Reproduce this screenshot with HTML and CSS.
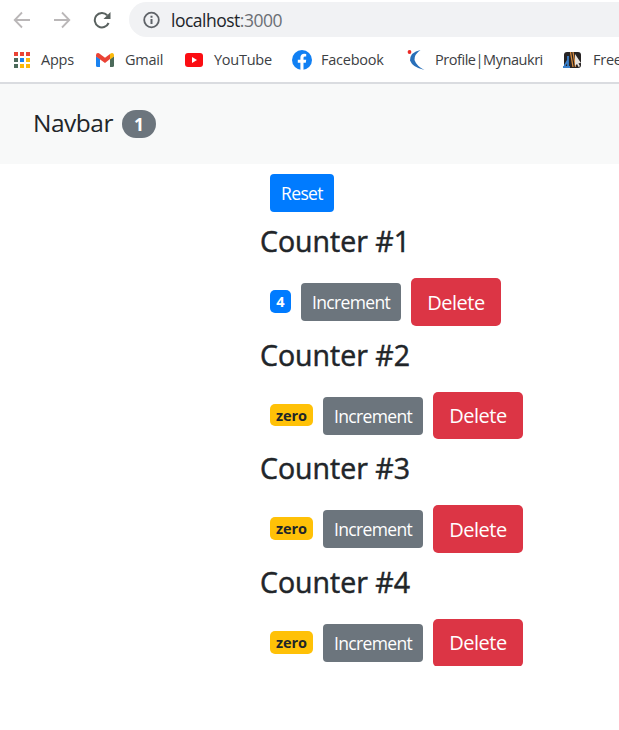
FILE: index.html
```html
<!DOCTYPE html>
<html lang="en">
<head>
<meta charset="utf-8">
<title>React App</title>
<link rel="stylesheet" href="styles.css">
</head>
<body>
<header class="browser">
  <div class="toolbar">
    <svg class="nav-icon back" width="18" height="18" viewBox="0 0 18 18" fill="none" stroke="#bab7b8" stroke-width="1.8"><path d="M17 9H2M9 1.5L1.7 9L9 16.500"/></svg>
    <svg class="nav-icon forward" width="18" height="18" viewBox="0 0 18 18" fill="none" stroke="#bab7b8" stroke-width="1.8"><path d="M1 9H16M9 1.500L16.300 9L9 16.500"/></svg>
    <svg class="nav-icon reload" width="18" height="18" viewBox="0 0 18 18"><path d="M15.600 12A7.200 7.200 0 1 1 14.200 4.200" fill="none" stroke="#59615f" stroke-width="2"/><path d="M17.500 1v7h-7z" fill="#59615f"/></svg>
    <div class="address">
      <svg width="18" height="18" viewBox="0 0 18 18"><circle cx="9.500" cy="9" r="7.300" fill="none" stroke="#5f6368" stroke-width="1.800"/><path d="M9.500 8v5M9.500 4.800v2" stroke="#5f6368" stroke-width="2"/></svg>
      <span class="url">localhost<span class="port">:3000</span></span>
    </div>
  </div>
  <nav class="bookmarks">
    <a class="bookmark apps"><svg width="18" height="18" viewBox="0 0 18 18"><path fill="#ea4335" d="M1 1h4v4H1zM7 1h4v4H7zM13 1h4v4h-4z"/><path fill="#4c6a5a" d="M1 7h4v4H1zM1 13h4v4H1z"/><path fill="#1a82f0" d="M7 7h4v4H7z"/><path fill="#fbb90b" d="M13 7h4v4h-4zM7 13h4v4H7zM13 13h4v4h-4z"/></svg><span>Apps</span></a>
    <a class="bookmark gmail"><svg width="20" height="16" viewBox="0 0 20 16"><path fill="#1a82f0" d="M1 4l4 3v8H2.500Q1 15 1 13.500z"/><path fill="#4c6a5a" d="M15 7l4-3v9.500Q19 15 17.500 15H15z"/><path fill="#ea4335" d="M1 3.200Q1 1 3 1Q4 1 5 2L10 5.700L15 2v5L10 11L1 4.500z"/><path fill="#fbb90b" d="M15 2Q16.500.700 18 1.300Q19 1.800 19 3.200V4.500L15 7.500z"/></svg><span>Gmail</span></a>
    <a class="bookmark youtube"><svg width="18" height="14" viewBox="0 0 18 14"><rect width="18" height="14" rx="3" fill="#fb0d12"/><path fill="#fff" d="M7 4l5 3l-5 3z"/></svg><span>YouTube</span></a>
    <a class="bookmark facebook"><svg width="20" height="20" viewBox="0 0 20 20"><circle cx="10" cy="10" r="10" fill="#1180f3"/><path fill="#fff" d="M8.400 20v-7.300H5.800V9.800h2.600V7.600C8.400 5 9.900 3.700 12.200 3.700q1.100 0 2 .2v2.500h-1.200q-1.500 0-1.500 1.400v2h2.700l-.4 2.900h-2.300V20z"/></svg><span>Facebook</span></a>
    <a class="bookmark naukri"><svg width="18" height="20" viewBox="0 0 18 20"><circle cx="2.500" cy="2" r="1.900" fill="#eb2925"/><path fill="#286fb9" d="M13.500 0Q7 4.500 7.500 10Q9.500 16 17.500 20Q5.500 17.500 3 10.500Q3 2 13.500 0z"/></svg><span>Profile|Mynaukri</span></a>
    <a class="bookmark free"><svg width="20" height="18" viewBox="0 0 20 18"><rect x="2" y="1" width="17" height="16" rx="3" fill="#272323"/><path d="M6 5v5M2.500 15l3.500-6v6M1 16h7" stroke="#397fca" stroke-width="1.800" fill="none"/><path d="M8.500 1l2.500 15M11 1l2.500 15" stroke="#d98c3f" stroke-width="1.300"/><path fill="#e8e2dc" d="M13 3l6 9l-2.500.2l1.500 3l-1.500.8l-1.500-3l-2 2z"/></svg><span>Free</span></a>
  </nav>
</header>
<nav class="navbar"><span class="brand">Navbar</span><span class="pill">1</span></nav>
<main class="counters">
  <button class="btn reset"><span>Reset</span></button>
  <section class="counter"><h3>Counter #1</h3><div class="row"><span class="badge primary">4</span><button class="btn increment"><span>Increment</span></button><button class="btn delete"><span>Delete</span></button></div></section>
  <section class="counter"><h3>Counter #2</h3><div class="row"><span class="badge warning">zero</span><button class="btn increment"><span>Increment</span></button><button class="btn delete"><span>Delete</span></button></div></section>
  <section class="counter"><h3>Counter #3</h3><div class="row"><span class="badge warning">zero</span><button class="btn increment"><span>Increment</span></button><button class="btn delete"><span>Delete</span></button></div></section>
  <section class="counter"><h3>Counter #4</h3><div class="row"><span class="badge warning">zero</span><button class="btn increment"><span>Increment</span></button><button class="btn delete"><span>Delete</span></button></div></section>
</main>
</body>
</html>
```
FILE: styles.css
```css
* { box-sizing: border-box; }
body {
  margin: 0;
  background: #fff;
  color: #212529;
  font-family: "Open Sans", "Noto Sans", sans-serif;
  overflow: hidden;
}
svg { display: block; flex: none; }

.browser {
  height: 84px;
  border-bottom: 2px solid #dadce0;
  overflow: hidden;
}
.toolbar {
  display: flex;
  align-items: center;
  height: 37px;
  padding: 2px 0 0 13px;
}
.nav-icon { margin-right: 22px; }
.reload { margin-right: 18px; }
.address {
  display: flex;
  align-items: center;
  flex: 1;
  height: 35px;
  padding-left: 13px;
  border-radius: 18px 0 0 18px;
  background: #f1f2f4;
}
.url {
  margin-left: 11px;
  font-size: 17.500px;
  letter-spacing: -0.500px;
  white-space: nowrap;
}
.port { color: #6b6f74; }
.bookmarks {
  display: flex;
  align-items: center;
  height: 45px;
  padding-left: 13px;
}
.bookmark {
  display: flex;
  align-items: center;
  flex: none;
  color: #3c4043;
  font-size: 14.500px;
  letter-spacing: -0.25px;
  white-space: nowrap;
}
.apps { width: 82px; gap: 10px; }
.gmail { width: 90px; gap: 10px; }
.youtube { width: 107px; gap: 11px; }
.facebook { width: 115px; gap: 9px; }
.naukri { width: 155px; gap: 10px; letter-spacing: -0.45px; }
.free { gap: 11px; }

.navbar {
  display: flex;
  align-items: center;
  height: 80px;
  padding-left: 33px;
  background: #f8f9f9;
}
.brand {
  width: 89px;
  padding-bottom: 4px;
  font-size: 24.500px;
  letter-spacing: -0.5px;
}
.pill {
  width: 34px;
  height: 28px;
  border-radius: 14px;
  background: #6c757d;
  color: #fff;
  font-size: 17.500px;
  font-weight: 700;
  line-height: 28px;
  text-align: center;
}

.counters { padding: 10px 0 0 260px; }
.btn {
  display: block;
  height: 38px;
  padding: 0;
  border: 0;
  border-radius: 4px;
  color: #fff;
  font-family: inherit;
  font-size: 17.500px;
  letter-spacing: -0.65px;
  text-align: center;
}
.reset {
  width: 64px;
  margin-left: 10px;
  background: #007bff;
}
.counter { height: 113.600px; }
h3 {
  height: 66px;
  margin: 0;
  padding-top: 10px;
  font-size: 28.500px;
  font-weight: 500;
  line-height: 38px;
  letter-spacing: 0;
  -webkit-text-stroke: 0.5px currentColor;
}
.row {
  display: flex;
  align-items: center;
  gap: 10px;
  height: 48px;
  padding-left: 10px;
}
.badge {
  height: 22.500px;
  margin-bottom: 1px;
  border-radius: 5px;
  font-size: 14.500px;
  font-weight: 700;
  line-height: 23px;
  text-align: center;
}
.primary { width: 21px; background: #007bff; color: #fff; }
.warning { width: 43px; background: #ffc107; color: #212529; }
.increment { width: 100px; background: #6c757d; }
.delete {
  width: 90px;
  height: 47.500px;
  border-radius: 5px;
  background: #dc3545;
  font-size: 20px;
  letter-spacing: -0.5px;
}
```
